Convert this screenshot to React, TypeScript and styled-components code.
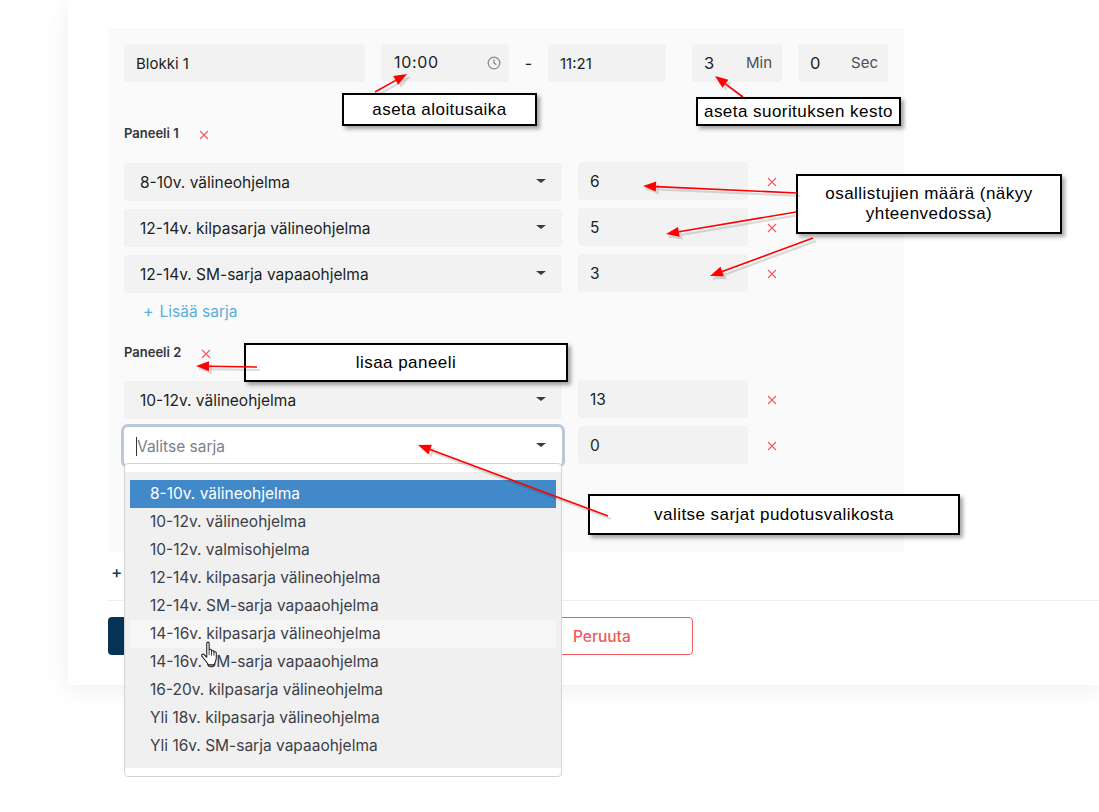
import React from "react";
import styled, { createGlobalStyle } from "styled-components";

const SERIES = [
	"8-10v. välineohjelma",
	"10-12v. välineohjelma",
	"10-12v. valmisohjelma",
	"12-14v. kilpasarja välineohjelma",
	"12-14v. SM-sarja vapaaohjelma",
	"14-16v. kilpasarja välineohjelma",
	"14-16v. SM-sarja vapaaohjelma",
	"16-20v. kilpasarja välineohjelma",
	"Yli 18v. kilpasarja välineohjelma",
	"Yli 16v. SM-sarja vapaaohjelma",
];

const GlobalStyle = createGlobalStyle`
	* {
		box-sizing: border-box;
	}
	html, body {
		margin: 0;
		height: 812px;
		overflow: hidden;
		background: #ffffff;
		font-family: "Inter", "Noto Sans", sans-serif;
		color: #1b1e24;
	}
`;

const Page = styled.div`
	position: relative;
	width: 1099px;
	height: 812px;
	padding-left: 68px;
	background: #ffffff;
`;

const Card = styled.div`
	height: 685px;
	padding: 28px 0 0 40px;
	background: #ffffff;
	box-shadow: 0 4px 24px rgba(0, 0, 0, 0.07);
`;

const BlockPanel = styled.div`
	width: 796px;
	height: 524px;
	padding: 16px 16px 0;
	background: #fafafa;
`;

const TopRow = styled.div`
	display: flex;
	align-items: center;
	height: 38px;
`;

const Field = styled.div<{ $width: number; $left?: number }>`
	display: flex;
	align-items: center;
	justify-content: space-between;
	flex: none;
	width: ${(p) => p.$width}px;
	height: 38px;
	margin-left: ${(p) => p.$left ?? 0}px;
	padding: 0 10px 0 12px;
	border-radius: 4px;
	background: #f2f2f2;
	font-size: 15px;
`;

const StartTime = styled.span`
	margin: -2px 0 0 1px;
	font-size: 16px;
	letter-spacing: 0.7px;
`;

const Amount = styled.span`
	font-size: 16.5px;
`;

const Dash = styled.span`
	flex: none;
	width: 39px;
	text-align: center;
	font-size: 16px;
`;

const Unit = styled.span`
	margin-top: -2px;
	color: #4a4f57;
	font-size: 15px;
`;

const PanelTitle = styled.div<{ $top: number; $bottom: number }>`
	display: flex;
	align-items: center;
	height: 16px;
	margin: ${(p) => p.$top}px 0 ${(p) => p.$bottom}px;
	font-size: 13px;
	font-weight: 600;
	color: #33363c;
`;

const TitleRemove = styled.span`
	display: flex;
	margin: 3px 0 0 20px;
`;

const SeriesRow = styled.div`
	display: flex;
	align-items: flex-start;
	height: 38px;
	margin-bottom: 8px;
`;

const SelectBox = styled.div<{ $focused?: boolean }>`
	display: flex;
	align-items: center;
	justify-content: space-between;
	flex: none;
	width: 438px;
	height: 38px;
	padding: 0 16px;
	border-radius: 4px;
	background: ${(p) => (p.$focused ? "#ffffff" : "#f2f2f2")};
	box-shadow: ${(p) => (p.$focused ? "0 0 0 3px #b8c8d6" : "none")};
	font-size: 15.5px;
`;

const Placeholder = styled.span`
	margin-left: -4px;
	border-left: 1px solid #333;
	color: #7c8087;
`;

const Caret = styled.span`
	width: 0;
	height: 0;
	margin-top: -2px;
	border-left: 5px solid transparent;
	border-right: 5px solid transparent;
	border-top: 4px solid #3a3a3a;
`;

const CountBox = styled.div`
	flex: none;
	width: 170px;
	height: 38px;
	margin: -1px 0 0 16px;
	padding: 0 12px;
	border-radius: 4px;
	background: #f2f2f2;
	font-size: 15.5px;
	line-height: 39px;
`;

const RowRemove = styled.span`
	display: flex;
	margin: 14px 0 0 19px;
`;

const AddSeries = styled.div`
	display: flex;
	align-items: center;
	gap: 6px;
	height: 20px;
	margin-left: 19px;
	color: #5aaede;
	font-size: 15.5px;
`;

const Plus = styled.span`
	font-size: 16px;
	line-height: 1;
`;

const AddBlock = styled.div`
	margin-top: 11px;
	height: 18px;
	padding-left: 3px;
	color: #0f3a5c;
	font-size: 17px;
	font-weight: 500;
	line-height: 18px;
`;

const Divider = styled.div`
	height: 1px;
	margin-top: 19px;
	background: #eeeeee;
`;

const Actions = styled.div`
	display: flex;
	align-items: stretch;
	gap: 16px;
	margin-top: 16px;
	height: 38px;
`;

const SaveButton = styled.div`
	width: 190px;
	border-radius: 4px;
	background: #063457;
`;

const CancelButton = styled.div`
	display: flex;
	align-items: center;
	width: 369px;
	margin-left: 10px;
	padding-left: 248px;
	border: 1px solid #ee5a5f;
	border-radius: 4px;
	color: #ee5a5f;
	font-size: 15.5px;
	font-weight: 500;
`;

const Dropdown = styled.div`
	position: absolute;
	left: 124px;
	top: 463px;
	width: 438px;
	height: 314px;
	padding-top: 8px;
	background: #ffffff;
	border: 1px solid #d4d4d4;
	border-radius: 4px;
`;

const OptionList = styled.div`
	height: 296px;
	padding: 8px 5px 0;
	background: #f0f0f0;
`;

const Option = styled.div<{ $active?: boolean; $hover?: boolean }>`
	height: 28px;
	padding-left: 20px;
	background: ${(p) => (p.$active ? "#4189c8" : p.$hover ? "#f6f6f6" : "transparent")};
	color: ${(p) => (p.$active ? "#ffffff" : "#3c3f47")};
	font-size: 15.5px;
	line-height: 27px;
`;

const Overlay = styled.svg`
	position: absolute;
	inset: 0;
	width: 1099px;
	height: 812px;
	pointer-events: none;
`;

const Callout = styled.div<{ $x: number; $y: number; $w: number; $h: number }>`
	position: absolute;
	left: ${(p) => p.$x}px;
	top: ${(p) => p.$y}px;
	width: ${(p) => p.$w}px;
	height: ${(p) => p.$h}px;
	display: flex;
	align-items: center;
	justify-content: center;
	text-align: center;
	background: #ffffff;
	border: 2px solid #000000;
	box-shadow: 3px 3px 4px rgba(0, 0, 0, 0.35);
	color: #000000;
	font-family: "Liberation Sans", Arial, sans-serif;
	font-size: 17px;
	letter-spacing: 0.45px;
	line-height: 20px;
`;

const Cursor = styled.svg`
	position: absolute;
	left: 200px;
	top: 641px;
`;

const ClockSvg = styled.svg`
	margin-right: -2px;
`;

const ClockIcon = () => (
	<ClockSvg width="14" height="14" viewBox="0 0 14 14" fill="none" stroke="#8a8a8a" strokeWidth="1.3">
		<circle cx="7" cy="7" r="5.8" />
		<path d="M7 3.6V7l2.4 1.6" />
	</ClockSvg>
);

const RemoveIcon = () => (
	<svg width="10" height="10" viewBox="0 0 10 10" fill="none" stroke="#ef5a5f" strokeWidth="1.1">
		<path d="M1 1l8 8M9 1l-8 8" />
	</svg>
);

const Arrow = ({ x1, y1, x2, y2 }: { x1: number; y1: number; x2: number; y2: number }) => {
	const len = Math.hypot(x2 - x1, y2 - y1);
	const ux = (x2 - x1) / len;
	const uy = (y2 - y1) / len;
	const bx = x2 - ux * 13;
	const by = y2 - uy * 13;
	const head = `${x2},${y2} ${bx - uy * 5},${by + ux * 5} ${bx + uy * 5},${by - ux * 5}`;
	return (
		<g>
			<g transform="translate(3 3)" opacity="0.13">
				<line x1={x1} y1={y1} x2={x2} y2={y2} stroke="#000" strokeWidth="2" />
				<polygon points={head} fill="#000" />
			</g>
			<line x1={x1} y1={y1} x2={bx} y2={by} stroke="#ff0000" strokeWidth="1.6" />
			<polygon points={head} fill="#ff0000" />
		</g>
	);
};

const Row = ({ label, count }: { label: string; count: string }) => (
	<SeriesRow>
		<SelectBox>
			<span>{label}</span>
			<Caret />
		</SelectBox>
		<CountBox>{count}</CountBox>
		<RowRemove>
			<RemoveIcon />
		</RowRemove>
	</SeriesRow>
);

export default function App() {
	return (
		<Page>
			<GlobalStyle />
			<Card>
				<BlockPanel>
					<TopRow>
						<Field $width={241}>Blokki 1</Field>
						<Field $width={128} $left={16}>
							<StartTime>10:00</StartTime>
							<ClockIcon />
						</Field>
						<Dash>-</Dash>
						<Field $width={118}>11:21</Field>
						<Field $width={90} $left={26}>
							<Amount>3</Amount>
							<Unit>Min</Unit>
						</Field>
						<Field $width={90} $left={16}>
							<Amount>0</Amount>
							<Unit>Sec</Unit>
						</Field>
					</TopRow>
					<PanelTitle $top={43} $bottom={22}>
						Paneeli 1
						<TitleRemove>
							<RemoveIcon />
						</TitleRemove>
					</PanelTitle>
					<Row label="8-10v. välineohjelma" count="6" />
					<Row label="12-14v. kilpasarja välineohjelma" count="5" />
					<Row label="12-14v. SM-sarja vapaaohjelma" count="3" />
					<AddSeries>
						<Plus>+</Plus>
						Lisää sarja
					</AddSeries>
					<PanelTitle $top={23} $bottom={21}>
						Paneeli 2
						<TitleRemove>
							<RemoveIcon />
						</TitleRemove>
					</PanelTitle>
					<Row label="10-12v. välineohjelma" count="13" />
					<SeriesRow>
						<SelectBox $focused>
							<Placeholder>Valitse sarja</Placeholder>
							<Caret />
						</SelectBox>
						<CountBox>0</CountBox>
						<RowRemove>
							<RemoveIcon />
						</RowRemove>
					</SeriesRow>
				</BlockPanel>
				<AddBlock>+</AddBlock>
				<Divider />
				<Actions>
					<SaveButton />
					<CancelButton>Peruuta</CancelButton>
				</Actions>
			</Card>
			<Dropdown>
				<OptionList>
					{SERIES.map((s, i) => (
						<Option key={s} $active={i === 0} $hover={i === 5}>
							{s}
						</Option>
					))}
				</OptionList>
			</Dropdown>
			<Callout $x={342} $y={93} $w={195} $h={33}>aseta aloitusaika</Callout>
			<Callout $x={696} $y={97} $w={205} $h={29}>aseta suorituksen kesto</Callout>
			<Callout $x={796} $y={174} $w={266} $h={60}>
				osallistujien määrä (näkyy
				<br />
				yhteenvedossa)
			</Callout>
			<Callout $x={244} $y={343} $w={324} $h={39}>lisaa paneeli</Callout>
			<Callout $x={588} $y={494} $w={372} $h={41}>valitse sarjat pudotusvalikosta</Callout>
			<Overlay viewBox="0 0 1099 812">
				<Arrow x1={375} y1={92} x2={407} y2={74} />
				<Arrow x1={743} y1={97} x2={715} y2={76} />
				<Arrow x1={797} y1={193} x2={643} y2={186} />
				<Arrow x1={796} y1={212} x2={666} y2={234} />
				<Arrow x1={813} y1={238} x2={710} y2={276} />
				<Arrow x1={257} y1={367} x2={196} y2={366} />
				<Arrow x1={608} y1={516} x2={418} y2={445} />
			</Overlay>
			<Cursor width="20" height="26" viewBox="0 0 18 24">
				<path
					d="M6 2c0-1.3 2.2-1.3 2.2 0v6.500c0-1.200 2.200-1.200 2.200 0v1.200c0-1.200 2.200-1.200 2.200 0v1c0-1.200 2.200-1 2.200.3v4.500c0 3-1.200 4.500-2 6.500H7.500c-1-2.200-3.300-4.500-6-8-.8-1.200.8-2.500 2-1.500L6 15z"
					fill="#ffffff"
					stroke="#222222"
					strokeWidth="1"
					strokeLinejoin="round"
				/>
				<path d="M8.2 9v4M10.4 10v3.500M12.600 10.500v3" fill="none" stroke="#222222" strokeWidth="0.8" />
			</Cursor>
		</Page>
	);
}
